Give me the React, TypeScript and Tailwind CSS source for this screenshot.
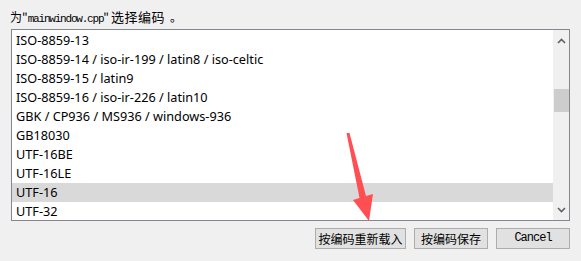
import React from "react";

const items = [
  "ISO-8859-13",
  "ISO-8859-14 / iso-ir-199 / latin8 / iso-celtic",
  "ISO-8859-15 / latin9",
  "ISO-8859-16 / iso-ir-226 / latin10",
  "GBK / CP936 / MS936 / windows-936",
  "GB18030",
  "UTF-16BE",
  "UTF-16LE",
  "UTF-16",
  "UTF-32",
];

const ui = { fontFamily: '"Noto Sans", "Noto Sans CJK SC", sans-serif' };
const cjk = { fontFamily: '"Noto Sans CJK SC", sans-serif' };
const mono = { fontFamily: '"Liberation Mono", "DejaVu Sans Mono", monospace' };

export default function App() {
  return (
    <div className="relative w-[581px] h-[261px] bg-[#f0f0f0] overflow-hidden text-[12px] text-black" style={ui}>
      <div className="pl-[10px] pt-[9px] h-[29px] leading-[16px] whitespace-nowrap flex items-baseline">
        <span style={cjk} className="text-[12px]">为"</span>
        <span style={mono} className="text-[11px] tracking-[-1.2px]">mainwindow.cpp</span>
        <span style={cjk} className="text-[12px]">"</span>
        <span style={cjk} className="text-[13px] tracking-[0.5px] ml-[2px]">选择编码</span>
        <span style={cjk} className="text-[12px] ml-[5px]">。</span>
      </div>
      <div className="ml-[11px] w-[559px] h-[192px] border border-[#828790] bg-white flex">
        <div className="flex-1 pt-[1px] overflow-hidden">
          {items.map((t, i) => (
            <div
              key={t}
              className={`h-[19px] leading-[19px] pl-[4px] whitespace-nowrap text-[12.7px] ${i === 8 ? "bg-[#d9d9d9]" : ""}`}
            >
              {t}
            </div>
          ))}
        </div>
        <div className="w-[16px] bg-[#f0f0f0] flex flex-col items-center">
          <div className="h-[20px] w-full flex items-center justify-center pt-[1px]">
            <svg width="9" height="6" viewBox="0 0 9 6">
              <path d="M1 5 L4.5 1.5 L8 5" stroke="#606060" strokeWidth="1.6" fill="none" />
            </svg>
          </div>
          <div className="h-[39px]" />
          <div className="w-[15px] h-[23px] bg-[#cdcdcd]" />
          <div className="flex-1" />
          <div className="h-[20px] w-full flex items-center justify-center">
            <svg width="9" height="6" viewBox="0 0 9 6">
              <path d="M1 1 L4.5 4.5 L8 1" stroke="#606060" strokeWidth="1.6" fill="none" />
            </svg>
          </div>
        </div>
      </div>
      <div className="flex justify-end gap-[8px] pr-[11px] pt-[7px]">
        <button className="w-[91px] h-[21px] border border-[#adadad] bg-[#e1e1e1] text-[12px] leading-[19px]" style={cjk}>
          按编码重新载入
        </button>
        <button className="w-[74px] h-[21px] border border-[#adadad] bg-[#e1e1e1] text-[12px] leading-[19px]" style={cjk}>
          按编码保存
        </button>
        <button className="w-[74px] h-[21px] border border-[#adadad] bg-[#e1e1e1] text-[12px] leading-[19px] tracking-[-1px]" style={mono}>
          Cancel
        </button>
      </div>
      <svg className="absolute left-0 top-0 pointer-events-none" width="581" height="261">
        <polygon
          points="346.5,133 349.5,133 366,196 373,194 369,221 353,200 359.5,198"
          fill="#ff4f52"
        />
      </svg>
    </div>
  );
}
